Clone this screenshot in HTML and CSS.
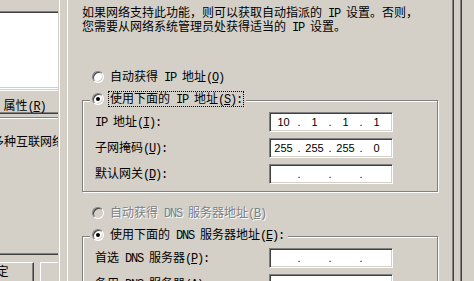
FILE: index.html
```html
<!DOCTYPE html>
<html>
<head>
    <meta charset="utf-8">
    <title>Internet 协议 (TCP/IP) 属性</title>
    <link rel="stylesheet" href="styles.css">
</head>
<body>
    <div class="back">
        <div class="back-page">
            <div class="listbox"></div>
            <div class="btn btn-props">属性<span class="en">(<u>R</u>)</span></div>
            <div class="desc">多种互联网络的通讯。</div>
        </div>
        <div class="back-buttons">
            <div class="btn btn-ok">确定</div>
            <div class="btn btn-cancel">取消</div>
        </div>
    </div>

    <div class="dialog">
        <div class="page">
            <p class="info">如果网络支持此功能，则可以获取自动指派的<span class="en"> IP </span>设置。否则，<br>您需要从网络系统管理员处获得适当的<span class="en"> IP </span>设置。</p>

            <div class="option first">
                <span class="radio"></span>
                <span class="caption">自动获得<span class="en"> IP </span>地址<span class="en">(<u>O</u>)</span></span>
            </div>

            <div class="group">
                <div class="option legend">
                    <span class="radio on"></span>
                    <span class="caption focus">使用下面的<span class="en"> IP </span>地址<span class="en">(<u>S</u>):</span></span>
                </div>
                <div class="row">
                    <span class="label"><span class="en">IP </span>地址<span class="en">(<u>I</u>):</span></span>
                    <div class="ip"><span>10</span><i>.</i><span>1</span><i>.</i><span>1</span><i>.</i><span>1</span></div>
                </div>
                <div class="row">
                    <span class="label">子网掩码<span class="en">(<u>U</u>):</span></span>
                    <div class="ip"><span>255</span><i>.</i><span>255</span><i>.</i><span>255</span><i>.</i><span>0</span></div>
                </div>
                <div class="row">
                    <span class="label">默认网关<span class="en">(<u>D</u>):</span></span>
                    <div class="ip"><span></span><i>.</i><span></span><i>.</i><span></span><i>.</i><span></span></div>
                </div>
            </div>

            <div class="option disabled">
                <span class="radio"></span>
                <span class="caption">自动获得<span class="en"> DNS </span>服务器地址<span class="en">(<u>B</u>)</span></span>
            </div>

            <div class="group">
                <div class="option legend">
                    <span class="radio on"></span>
                    <span class="caption">使用下面的<span class="en"> DNS </span>服务器地址<span class="en">(<u>E</u>):</span></span>
                </div>
                <div class="row">
                    <span class="label">首选<span class="en"> DNS </span>服务器<span class="en">(<u>P</u>):</span></span>
                    <div class="ip"><span></span><i>.</i><span></span><i>.</i><span></span><i>.</i><span></span></div>
                </div>
                <div class="row">
                    <span class="label">备用<span class="en"> DNS </span>服务器<span class="en">(<u>A</u>):</span></span>
                    <div class="ip"><span></span><i>.</i><span></span><i>.</i><span></span><i>.</i><span></span></div>
                </div>
            </div>
        </div>
    </div>
</body>
</html>
```

FILE: styles.css
```css
body {
    margin: 0;
    width: 474px;
    height: 281px;
    overflow: hidden;
    display: flex;
    background: #d4d0c8;
    color: #000;
    font-family: "Noto Sans CJK SC", sans-serif;
    font-size: 12px;
    line-height: 12px;
}

.en {
    font-family: "Liberation Mono", monospace;
    letter-spacing: -1.2px;
}

u {
    text-decoration: underline;
}

/* window behind, cut off by the dialog */
.back {
    width: 58px;
    height: 281px;
    flex: none;
    overflow: hidden;
}

.back-page {
    width: 120px;
    height: 255px;
    box-sizing: border-box;
    padding-top: 11px;
    border-bottom: 1px solid #404040;
    box-shadow: inset 0 -1px #808080;
}

.listbox {
    width: 100px;
    height: 78px;
    margin-left: -10px;
    box-sizing: border-box;
    background: #fff;
    border: 1px solid;
    border-color: #808080 #fff #fff #808080;
    box-shadow: inset 1px 1px #404040, inset -1px -1px #d4d0c8;
}

.btn {
    width: 75px;
    height: 24px;
    box-sizing: border-box;
    text-align: center;
    white-space: nowrap;
    background: #d4d0c8;
    border: 1px solid;
    border-color: #fff #404040 #404040 #fff;
    box-shadow: inset -1px -1px #808080;
}

.btn-props {
    margin: 1px 0 0 -13px;
    padding-top: 8px;
}

.desc {
    margin: 3px 0 0 -10px;
    padding: 17px 0 0 2px;
    border-top: 1px solid #808080;
    box-shadow: inset 0 1px #fff;
    white-space: nowrap;
}

.back-buttons {
    display: flex;
    gap: 6px;
    margin-top: 7px;
}

.btn-ok {
    flex: none;
    margin-left: -41px;
    padding-top: 2px;
}

.btn-cancel {
    flex: none;
    padding-top: 2px;
}

/* TCP/IP properties dialog */
.dialog {
    width: 404px;
    height: 281px;
    flex: none;
    box-sizing: border-box;
    padding: 0 8px 0 9px;
    box-shadow: inset 1px 0 #d4d0c8, inset 2px 0 #fff, inset -1px 0 #404040, inset -2px 0 #808080;
}

.page {
    height: 100%;
    overflow: hidden;
    box-sizing: border-box;
    padding: 6px 0 0 14px;
    border-left: 1px solid #fff;
    border-right: 1px solid #404040;
    box-shadow: inset -1px 0 #808080;
}

.info {
    margin: 0;
    white-space: nowrap;
}

.option {
    display: flex;
    align-items: center;
    height: 14px;
    padding-left: 10px;
    white-space: nowrap;
}

.option.first {
    margin-top: 36px;
}

.option.disabled {
    margin-top: 14px;
}

.caption {
    padding: 1px 2px;
}

.option.disabled .caption {
    color: #808080;
    text-shadow: 1px 1px 0 #fff;
}

.focus {
    outline: 1px dotted #000;
    outline-offset: -1px;
}

.radio {
    position: relative;
    flex: none;
    width: 12px;
    height: 12px;
    margin-right: 4px;
    box-sizing: border-box;
    border-radius: 50%;
    background: #fff;
    border: 1px solid;
    border-color: #808080 #fff #fff #808080;
    box-shadow: inset 1px 1px #404040, inset -1px -1px #d4d0c8;
}

.option.disabled .radio {
    background: #d4d0c8;
}

.radio.on::after {
    content: '';
    position: absolute;
    left: 3px;
    top: 3px;
    width: 4px;
    height: 4px;
    border-radius: 50%;
    background: #000;
}

.group {
    width: 356px;
    box-sizing: border-box;
    margin-top: 16px;
    padding-bottom: 7px;
    border: 1px solid #808080;
    box-shadow: inset 1px 1px #fff, 1px 1px #fff;
}

.option.legend {
    width: fit-content;
    margin: -9px 0 0 7px;
    padding: 0 2px;
    background: #d4d0c8;
}

.row {
    display: flex;
    align-items: center;
    height: 20px;
    margin-top: 6px;
    padding-left: 12px;
    white-space: nowrap;
}

.label {
    width: 174px;
    flex: none;
}

.ip {
    display: grid;
    grid-template-columns: 25px 6px 25px 6px 25px 6px 25px;
    align-items: center;
    width: 124px;
    height: 20px;
    box-sizing: border-box;
    padding: 0 0 0 1px;
    background: #fff;
    border: 1px solid;
    border-color: #808080 #fff #fff #808080;
    box-shadow: inset 1px 1px #404040, inset -1px -1px #d4d0c8;
    font-family: "Liberation Sans", Arial, sans-serif;
    font-size: 11px;
    line-height: 14px;
}

.ip span,
.ip i {
    font-style: normal;
    text-align: center;
}
```
